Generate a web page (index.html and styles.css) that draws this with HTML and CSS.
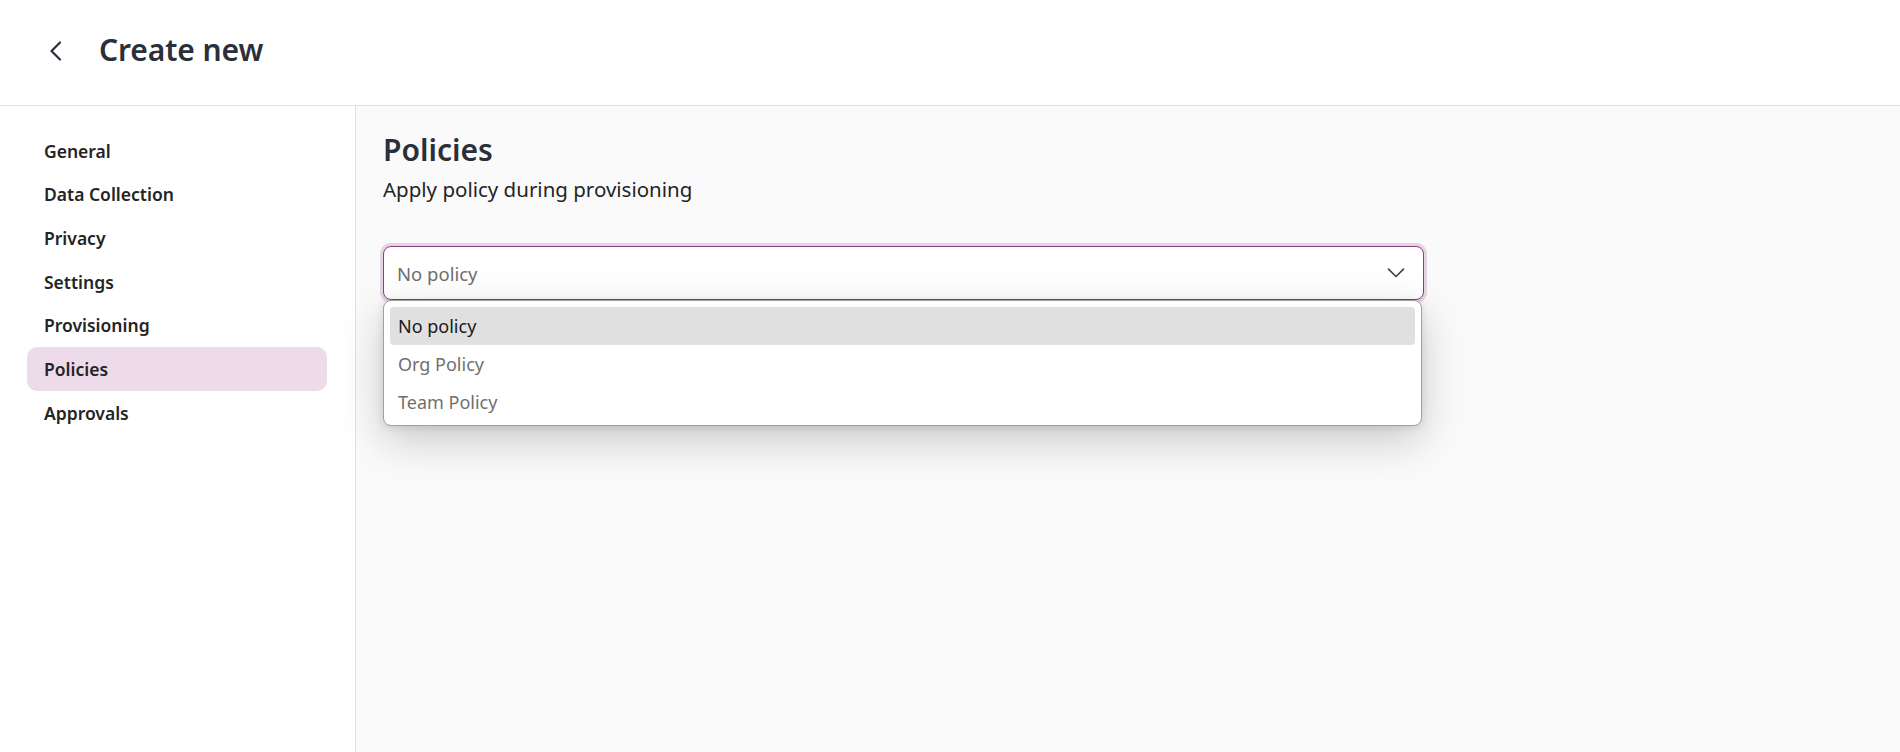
FILE: index.html
```html
<!DOCTYPE html>
<html lang="en">
<head>
<meta charset="utf-8">
<title>Create new</title>
<link rel="stylesheet" href="styles.css">
</head>
<body>
<header class="topbar">
  <button class="back" aria-label="Back">
    <svg width="14" height="20" viewBox="0 0 14 20"><path d="M11 1.5 L2.5 10 L11 18.5" fill="none" stroke="#2b2f3a" stroke-width="2.2" stroke-linecap="round" stroke-linejoin="round"/></svg>
  </button>
  <h1 class="title">Create new</h1>
</header>
<div class="layout">
  <nav class="sidebar">
    <a class="nav-item">General</a>
    <a class="nav-item">Data Collection</a>
    <a class="nav-item">Privacy</a>
    <a class="nav-item">Settings</a>
    <a class="nav-item">Provisioning</a>
    <a class="nav-item active">Policies</a>
    <a class="nav-item">Approvals</a>
  </nav>
  <main class="content">
    <h2 class="heading">Policies</h2>
    <p class="subtitle">Apply policy during provisioning</p>
    <div class="select-wrap">
      <div class="select">
        <span class="placeholder">No policy</span>
        <svg class="chev" width="18" height="10" viewBox="0 0 18 10"><path d="M1.5 1.2 L9 8.5 L16.5 1.2" fill="none" stroke="#444" stroke-width="1.7" stroke-linecap="round" stroke-linejoin="round"/></svg>
      </div>
      <ul class="menu">
        <li class="option selected">No policy</li>
        <li class="option">Org Policy</li>
        <li class="option">Team Policy</li>
      </ul>
    </div>
  </main>
</div>
</body>
</html>
```
FILE: styles.css
```css
* { box-sizing: border-box; }
html, body { margin: 0; padding: 0; height: 100%; }
body {
  font-family: "Noto Sans", "Open Sans", sans-serif;
  color: #242424;
  background: #fafafa;
  display: flex;
  flex-direction: column;
  height: 752px;
  overflow: hidden;
}
.topbar {
  height: 106px;
  flex: none;
  background: #fff;
  border-bottom: 1px solid #e0e0e0;
  display: flex;
  align-items: center;
  padding-left: 49px;
}
.back {
  border: 0;
  background: none;
  padding: 0;
  width: 14px;
  height: 20px;
  display: flex;
  margin-right: 36px;
  margin-top: -4px;
}
.title {
  margin: 0;
  font-size: 30px;
  font-weight: 600;
  color: #2b2f3a;
  letter-spacing: -0.1px;
  margin-top: -6px;
}
.layout {
  flex: 1;
  display: flex;
  min-height: 0;
}
.sidebar {
  width: 356px;
  flex: none;
  background: #fff;
  border-right: 1px solid #e0e0e0;
  padding: 23px 28px 0 27px;
  display: flex;
  flex-direction: column;
}
.nav-item {
  height: 43.67px;
  display: flex;
  align-items: center;
  padding-left: 17px;
  font-size: 17.5px;
  font-weight: 600;
  color: #242424;
  border-radius: 10px;
}
.nav-item.active { background: #eddbea; }
.content {
  flex: 1;
  padding: 24px 0 0 27px;
}
.heading {
  margin: 0;
  font-size: 30px;
  font-weight: 600;
  line-height: 40px;
  color: #2b2f3a;
}
.subtitle {
  margin: 4px 0 0;
  font-size: 20.5px;
  line-height: 30px;
  color: #242424;
}
.select-wrap {
  position: relative;
  width: 1041px;
  margin-top: 42px;
}
.select {
  height: 54px;
  background: #fff;
  border: 1.5px solid #8c3f80;
  border-radius: 8px;
  box-shadow: 0 0 0 3px #e6d3e3;
  display: flex;
  align-items: center;
  justify-content: space-between;
  padding: 0 18px 0 13px;
}
.placeholder {
  font-size: 18.5px;
  color: #6e6e6e;
}
.menu {
  position: absolute;
  top: 54px;
  left: 0;
  width: 1039px;
  margin: 0;
  padding: 6px 6px 4px;
  list-style: none;
  background: #fff;
  border: 1px solid #a0a0a0;
  border-radius: 8px;
  box-shadow: 0 14px 44px rgba(0,0,0,0.2), 0 2px 8px rgba(0,0,0,0.1);
}
.option {
  height: 38px;
  display: flex;
  align-items: center;
  padding-left: 8px;
  font-size: 18px;
  color: #707070;
  border-radius: 4px;
}
.option.selected {
  background: #e0e0e0;
  color: #1a1a1a;
}
```
